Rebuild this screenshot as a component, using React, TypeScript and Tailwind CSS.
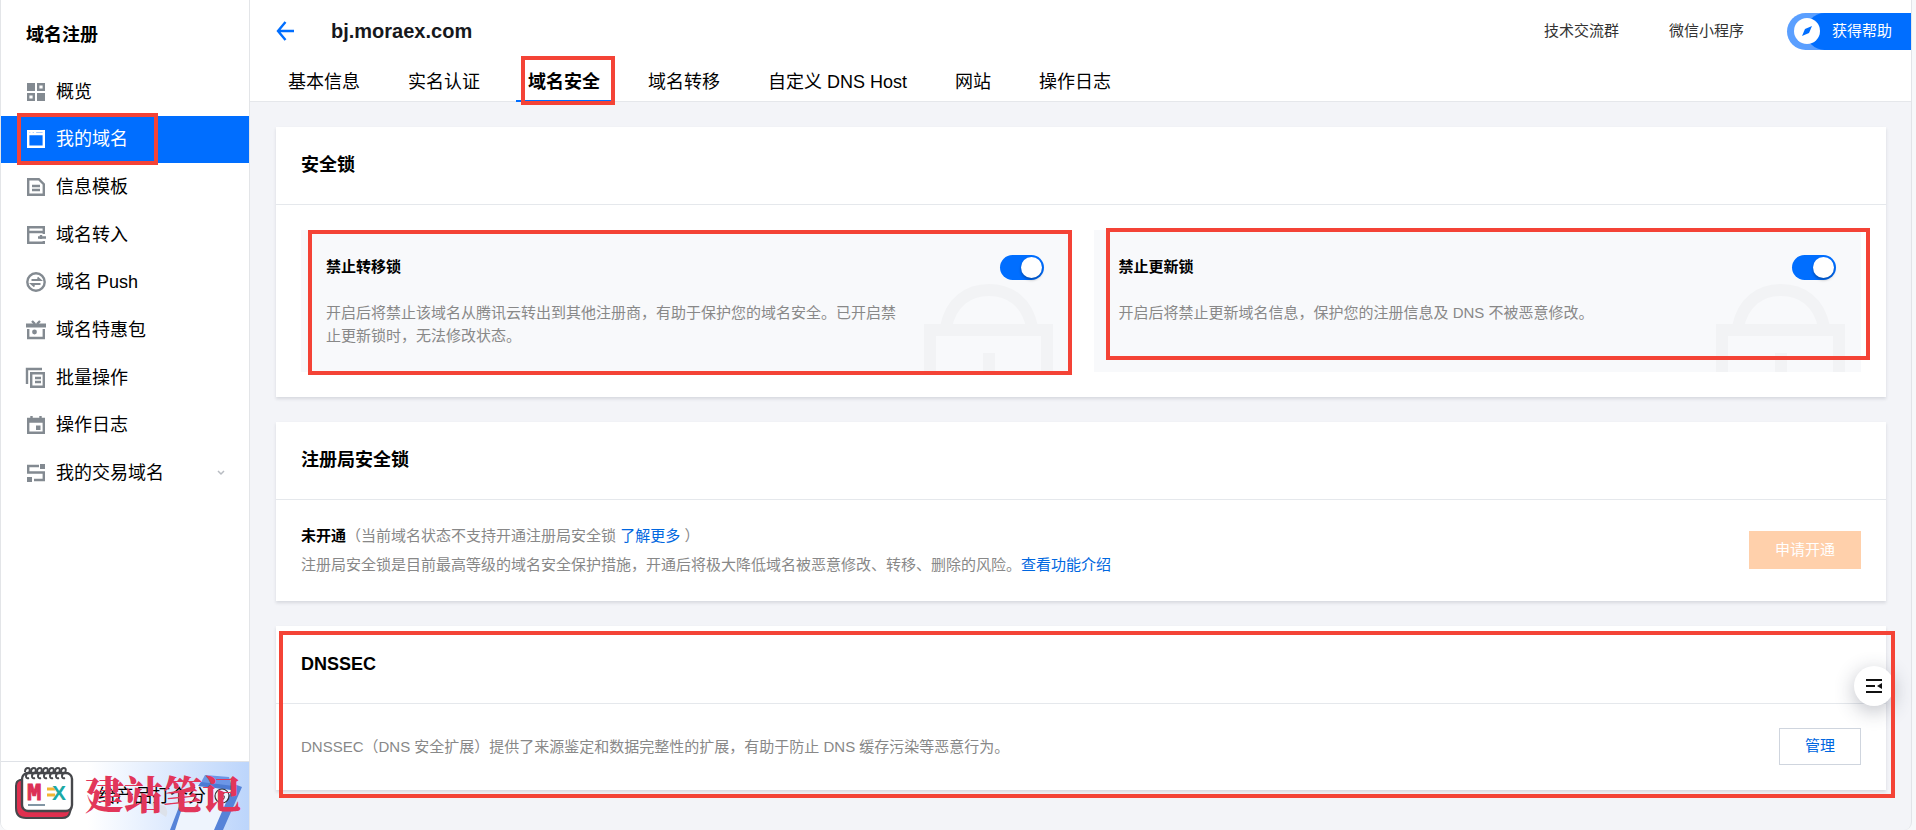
import { useState } from "react";
import type { ReactNode } from "react";

const REVIEW_TEXT = "给产品打个分";

const icons: Record<string, ReactNode> = {
  overview: (
    <>
      <path d="M0 0h8v8H0zM10 10h8v8h-8z" fill="currentColor" stroke="none" />
      <path d="M11.200 1.200h5.600v5.600h-5.600zM1.200 11.200h5.600v5.600H1.200z" />
    </>
  ),
  domain: (
    <>
      <path d="M1.200 1.200h15.600v15.600H1.200z" />
      <path d="M1 4h16M4.500 0v5M8 0v5" />
    </>
  ),
  template: (
    <>
      <path d="M1.200 1.200h10.600l5 5v10.600H1.200z" />
      <path d="M5 8h8M5 12h8" />
    </>
  ),
  transfer: (
    <>
      <path d="M16.800 8V1.200H1.200v15.600h15.600V15M1 6h16" />
      <path d="M19 11.500h-8M14 9v4" />
    </>
  ),
  push: (
    <>
      <circle cx="9" cy="9" r="8.700" />
      <path d="M4.500 7h9L10.500 4.500M13.500 11h-9l3 2.500" strokeWidth="1.800" />
    </>
  ),
  gift: (
    <>
      <path d="M-1 4.500h20" strokeWidth="4" />
      <path d="M5 0l3 3M13 0l-3 3" />
      <path d="M1.200 8v9h15.600V8" />
      <circle cx="7.500" cy="11" r="2.400" fill="currentColor" stroke="none" />
    </>
  ),
  batch: (
    <>
      <path d="M0 15V0h15" />
      <path d="M4.200 4.200h12.600v13.600H4.200z" />
      <path d="M8 9h6M8 13h6" />
    </>
  ),
  log: (
    <>
      <path d="M1.200 3h15.600v13.800H1.200z" />
      <path d="M0 4.500h18" strokeWidth="4.500" />
      <path d="M4.500 0v4M13.500 0v4" />
      <path d="M9 9.500h4.500V14H9z" fill="currentColor" stroke="none" />
    </>
  ),
  trade: (
    <>
      <path d="M12 2H1.200v6.500h15.600V16H7" />
      <path d="M13 0h5v5h-5zM0 13h5v5H0z" fill="currentColor" stroke="none" />
    </>
  ),
};

const menu = [
  { icon: "overview", label: "概览" },
  { icon: "domain", label: "我的域名", active: true },
  { icon: "template", label: "信息模板" },
  { icon: "transfer", label: "域名转入" },
  { icon: "push", label: "域名 Push" },
  { icon: "gift", label: "域名特惠包" },
  { icon: "batch", label: "批量操作" },
  { icon: "log", label: "操作日志" },
  { icon: "trade", label: "我的交易域名", expandable: true },
];

const tabs = ["基本信息", "实名认证", "域名安全", "域名转移", "自定义 DNS Host", "网站", "操作日志"];

// red frame that marks a spot on the page
const Mark = ({ className }: { className: string }) => (
  <span className={`pointer-events-none absolute z-20 border-4 border-[#f44336] ${className}`} />
);

const Logo = () => (
  <svg viewBox="0 0 60 54" className="h-[54px] w-[60px] shrink-0">
    <path d="M8 13H6q-4 1-4 6v22q0 10 10 10h36q7 0 8-6l1-3H14z" fill="#e0304f" stroke="#46474b" strokeWidth="2" />
    <rect x="8" y="6" width="50" height="38" rx="6" fill="#fff" stroke="#46474b" strokeWidth="2.400" />
    <g fill="none" stroke="#46474b" strokeWidth="2">
      {[14, 20, 26, 32, 38, 44, 50].map((x) => (
        <path key={x} d={`M${x + 1} 11q-3 1-3-2t3-3q2-5-1-5t-3 4`} />
      ))}
    </g>
    <text x="13" y="33" fontSize="18" fontWeight="900" fill="#dc3056" stroke="#dc3056" fontFamily="Liberation Mono" textAnchor="start">
      <tspan fontSize="24">M</tspan>
    </text>
    <path d="M33 22h8M33 28h8" stroke="#f2b632" strokeWidth="3" />
    <text x="38" y="33" fontSize="21" fontWeight="900" fill="#1ba9a5" fontFamily="Liberation Sans">X</text>
    <path d="M14 38h17" stroke="#8296a4" strokeWidth="2" />
  </svg>
);

const Clipboard = () => (
  <svg viewBox="0 0 110 68" className="absolute right-0 bottom-0 h-[68px] w-[110px]">
    <path d="M10 40l16 4q4 6 1 11q-9-5-17-15z" fill="#dde2ea" />
    <path d="M52 22l46 3-20 43H34z" fill="#eef4fd" />
    <path d="M46 37L36 68h-5l12-31zM95 22l8 3-19 43h-9z" fill="#5683d8" />
    <path d="M66 13l24 2 4 13-34-4z" fill="#6c96e6" />
    <path d="M62 20l33 4-2 4-34-4z" fill="#4d7bd3" />
  </svg>
);

const Sidebar = () => (
  <aside className="relative flex w-[250px] shrink-0 flex-col overflow-hidden rounded-bl-lg border-x border-[#e3e5e8] bg-white">
    <h2 className="px-[25px] pt-[21px] text-lg leading-7 font-bold">域名注册</h2>
    <nav className="pt-[19px]">
      <ul className="grid h-[429px] auto-rows-fr">
        {menu.map(({ icon, label, active, expandable }) => (
          <li key={label} className="relative">
            <a
              href="#"
              className={`flex h-full items-center gap-[11px] pr-6 pl-[26px] text-lg ${active ? "bg-[#006eff] text-white" : ""}`}
            >
              <svg
                viewBox="0 0 18 18"
                fill="none"
                stroke="currentColor"
                strokeWidth="2.400"
                className={`h-[18px] w-[18px] shrink-0 overflow-visible ${active ? "" : "text-[#838a91]"}`}
              >
                {icons[icon]}
              </svg>
              <span className="flex-1">{label}</span>
              {expandable && (
                <svg viewBox="0 0 8 6" fill="none" stroke="#b8bcc2" strokeWidth="1.500" className="h-[6px] w-2">
                  <path d="M1 1l3 3 3-3" />
                </svg>
              )}
            </a>
            {active && <Mark className="-top-[3px] left-4 h-[52px] w-[141px]" />}
          </li>
        ))}
      </ul>
    </nav>
    <div className="relative mt-auto flex h-[69px] items-center border-t border-[#dfe2e7] bg-linear-to-r from-white from-35% to-[#bcd5fb] pb-1 pl-[13px]">
      <Clipboard />
      <Logo />
      <div className="absolute top-5 left-[97px] flex items-center gap-2 text-lg leading-7">
        <a href="#">{REVIEW_TEXT}</a>
        <svg viewBox="0 0 16 16" fill="none" stroke="#333" strokeWidth="1.200" className="h-4 w-4">
          <circle cx="8" cy="8" r="7" />
          <path d="M6 5h4L8 7.500q3 0 2 2.500t-4 1" />
        </svg>
      </div>
      <span className="absolute top-[2px] left-[84px] font-['Noto_Serif_CJK_SC','Noto_Sans_CJK_SC',serif] text-[39px] leading-[56px] font-black whitespace-nowrap text-[#e2365a]">
        建站笔记
      </span>
    </div>
  </aside>
);

const Header = () => (
  <header className="border-b border-[#e5e7eb] bg-white">
    <div className="flex h-[62px] items-center pl-[26px]">
      <button type="button" aria-label="返回" className="text-[#006eff]">
        <svg viewBox="0 0 18 20" fill="none" stroke="currentColor" strokeWidth="2.400" className="h-5 w-[18px]">
          <path d="M9.500 1L2 10l7.500 9M2 10h16" />
        </svg>
      </button>
      <h1 className="pl-[37px] text-xl font-bold text-[#16181c]">bj.moraex.com</h1>
      <div className="ml-auto flex items-center text-[15px] text-[#333]">
        <a href="#" className="mr-[50px]">技术交流群</a>
        <a href="#" className="mr-[43px]">微信小程序</a>
        <button type="button" className="flex h-[37px] items-center rounded-l-full bg-[#5a9fff] text-white">
          <span className="z-10 ml-[7px] flex h-[26px] w-[26px] items-center justify-center rounded-full bg-white">
            <svg viewBox="0 0 10 10" className="h-[10px] w-[10px]">
              <path d="M10 0L7 7 0 10l3-7z" fill="#006eff" />
            </svg>
          </span>
          <span className="-ml-[14px] flex h-full items-center rounded-l-full bg-[#006eff] pr-[19px] pl-[26px]">获得帮助</span>
        </button>
      </div>
    </div>
    <nav className="flex gap-6 pl-[26px] text-lg">
      {tabs.map((tab) => {
        const active = tab === "域名安全";
        return (
          <a
            key={tab}
            href="#"
            className={`relative -mb-px border-b-2 px-3 pt-[2px] leading-9 ${active ? "border-[#006eff] font-bold" : "border-transparent"}`}
          >
            {tab}
            {active && <Mark className="-top-[6px] left-[5px] h-[49px] w-[94px]" />}
          </a>
        );
      })}
    </nav>
  </header>
);

const Card = ({ title, className = "", children }: { title: string; className?: string; children: ReactNode }) => (
  <section className="bg-white shadow-[0_2px_3px_rgba(54,58,80,0.15)]">
    <h3 className="border-b border-[#e5e8ec] px-[25px] py-6 text-lg leading-[29px] font-bold">{title}</h3>
    <div className={`px-[25px] ${className}`}>{children}</div>
  </section>
);

const LockPanel = ({ id, title, text, mark }: { id: string; title: string; text: string; mark: string }) => {
  const [locked, setLocked] = useState(true);

  return (
    <div className="relative min-h-[142px] bg-[#f8f9fb] p-[25px]">
      <svg viewBox="0 0 129 88" fill="none" stroke="#f2f3f5" strokeWidth="12" className="absolute right-4 bottom-0 h-[88px] w-[129px]">
        <path d="M6 94V46h117v48M65 69v25" />
        <path d="M22 43C27 18 44 6 65 6s38 12 43 37" />
      </svg>
      <div className="relative flex items-center justify-between">
        <label htmlFor={id} className="text-[15px] font-bold">{title}</label>
        <input
          id={id}
          type="checkbox"
          checked={locked}
          onChange={() => setLocked(!locked)}
          className="h-[25px] w-11 appearance-none rounded-full bg-gray-300 p-[2px] before:block before:h-[21px] before:w-[21px] before:rounded-full before:bg-white before:shadow-[0_2px_3px_rgba(0,0,0,0.3)] checked:bg-[#006eff] checked:before:ml-[19px]"
        />
      </div>
      <p className="relative mt-[21px] max-w-[580px] text-[15px] leading-[23px] text-[#888]">{text}</p>
      <Mark className={mark} />
    </div>
  );
};

const App = () => {
  return (
    <div className="flex min-h-screen bg-[#f7f8fa] font-['Liberation_Sans','Noto_Sans_CJK_SC',sans-serif] text-black">
      <Sidebar />
      <div className="mr-1 flex min-w-0 flex-1 flex-col rounded-br-lg border-r border-[#e2e4e8] bg-[#f3f4f8]">
        <Header />
        <main className="flex flex-col gap-[25px] p-[25px] pl-[26px]">
          <Card title="安全锁" className="grid grid-cols-2 gap-[25px] py-[25px]">
            <LockPanel
              id="transfer-lock"
              title="禁止转移锁"
              text="开启后将禁止该域名从腾讯云转出到其他注册商，有助于保护您的域名安全。已开启禁止更新锁时，无法修改状态。"
              mark="top-0 right-[-3px] -bottom-[3px] left-[7px]"
            />
            <LockPanel
              id="update-lock"
              title="禁止更新锁"
              text="开启后将禁止更新域名信息，保护您的注册信息及 DNS 不被恶意修改。"
              mark="-top-[2px] -right-[9px] bottom-3 left-3"
            />
          </Card>

          <Card title="注册局安全锁" className="flex items-center justify-between pt-[21px] pb-[22px]">
            <div className="text-[15px] leading-[29px] text-[#888]">
              <p>
                <strong className="text-black">未开通</strong>（当前域名状态不支持开通注册局安全锁{" "}
                <a href="#" className="text-[#0067e0]">了解更多</a> ）
              </p>
              <p>
                注册局安全锁是目前最高等级的域名安全保护措施，开通后将极大降低域名被恶意修改、转移、删除的风险。
                <a href="#" className="text-[#0067e0]">查看功能介绍</a>
              </p>
            </div>
            <button type="button" disabled className="h-[38px] bg-[#ffd0ab] px-[26px] text-[15px] text-white">
              申请开通
            </button>
          </Card>

          <div className="relative">
            <Card title="DNSSEC" className="flex items-center justify-between pt-6 pb-[25px]">
              <p className="text-[15px] leading-[23px] text-[#888]">
                DNSSEC（DNS 安全扩展）提供了来源鉴定和数据完整性的扩展，有助于防止 DNS 缓存污染等恶意行为。
              </p>
              <button type="button" className="h-[37px] border border-[#cfd5de] px-[25px] text-[15px] text-[#0067e0]">
                管理
              </button>
            </Card>
            <button
              type="button"
              aria-label="展开"
              className="absolute top-10 -right-2 z-10 flex h-10 w-10 items-center justify-center rounded-full bg-white shadow-[0_5px_20px_rgba(54,58,80,0.32)]"
            >
              <svg viewBox="0 0 16 14" fill="none" stroke="#111" strokeWidth="2" className="h-[14px] w-4">
                <path d="M0 1h16M0 7h9M0 13h16" />
                <path d="M16 4v6l-5-3z" fill="#111" stroke="none" />
              </svg>
            </button>
            <Mark className="top-[5px] -right-[9px] -bottom-2 left-[3px]" />
          </div>
        </main>
      </div>
    </div>
  );
};
export default App;
